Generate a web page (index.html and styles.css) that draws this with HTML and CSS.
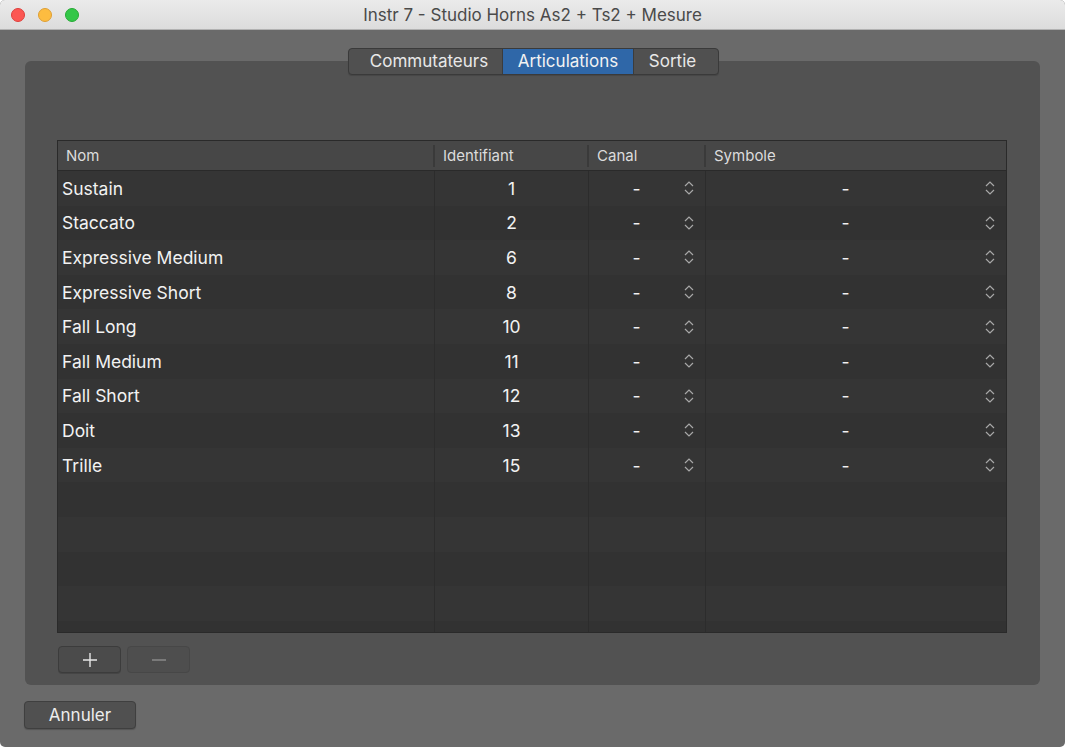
FILE: index.html
```html
<!DOCTYPE html>
<html lang="fr">
<head>
<meta charset="utf-8">
<title>Instr 7</title>
<link rel="stylesheet" href="styles.css">
</head>
<body>
<div class="window">
  <div class="titlebar">
    <div class="lights">
      <span class="light red"></span>
      <span class="light yellow"></span>
      <span class="light green"></span>
    </div>
    <div class="title">Instr 7 - Studio Horns As2 + Ts2 + Mesure</div>
  </div>
  <div class="content">
    <div class="segmented">
      <div class="seg">Commutateurs</div>
      <div class="seg active">Articulations</div>
      <div class="seg">Sortie</div>
    </div>
    <div class="panel">
      <div class="table">
        <div class="thead">
          <div class="th">Nom</div>
          <div class="th">Identifiant</div>
          <div class="th">Canal</div>
          <div class="th last">Symbole</div>
        </div>
        <div class="tbody" id="tbody"></div>
      </div>
      <div class="addrem">
        <button class="sq">
          <svg width="16" height="16" viewBox="0 0 16 16"><path d="M8 1v14M1 8h14" stroke="#e8e8e8" stroke-width="1.4" fill="none"/></svg>
        </button>
        <button class="sq dim">
          <svg width="16" height="16" viewBox="0 0 16 16"><path d="M1 8h14" stroke="#8a8a8a" stroke-width="1.4" fill="none"/></svg>
        </button>
      </div>
    </div>
    <div class="footer">
      <button class="btn">Annuler</button>
    </div>
  </div>
</div>
<script src="app.js"></script>
</body>
</html>
```

FILE: app.js
```js
const data = [
  ["Sustain", "1"], ["Staccato", "2"], ["Expressive Medium", "6"],
  ["Expressive Short", "8"], ["Fall Long", "10"], ["Fall Medium", "11"],
  ["Fall Short", "12"], ["Doit", "13"], ["Trille", "15"]
];
const stepper = '<svg class="step" width="10" height="18" viewBox="0 0 10 18"><path d="M1 7L5 3L9 7M1 11L5 15L9 11" stroke="#a8a8a8" stroke-width="1.2" fill="none"/></svg>';
const tb = document.getElementById("tbody");
let html = "";
for (let i = 0; i < 14; i++) {
  const r = data[i];
  html += '<div class="row ' + (i % 2 ? "odd" : "even") + '">';
  if (r) {
    html += '<div class="td name">' + r[0] + '</div>' +
      '<div class="td id">' + r[1] + '</div>' +
      '<div class="td pop"><span class="val">-</span>' + stepper + '</div>' +
      '<div class="td pop last"><span class="val">-</span>' + stepper + '</div>';
  } else {
    html += '<div class="td"></div><div class="td"></div><div class="td"></div><div class="td last"></div>';
  }
  html += '</div>';
}
tb.innerHTML = html;
```

FILE: styles.css
```css
html, body {
  margin: 0;
  padding: 0;
  background: #ffffff;
}
body {
  width: 1067px;
  height: 750px;
  overflow: hidden;
  font-family: Inter, "Noto Sans", sans-serif;
}
.window {
  width: 1065px;
  height: 747px;
  border-radius: 5px;
  overflow: hidden;
  background: #6a6a6a;
  display: flex;
  flex-direction: column;
}
.titlebar {
  height: 29px;
  flex: none;
  background: linear-gradient(#ebebeb, #dcdcdc);
  border-bottom: 1px solid #b2b2b2;
  display: flex;
  align-items: center;
  position: relative;
}
.lights {
  display: flex;
  gap: 13px;
  padding-left: 11px;
}
.light {
  width: 14px;
  height: 14px;
  border-radius: 50%;
  box-sizing: border-box;
}
.red { background: #fc5753; border: 1px solid #de3f3b; }
.yellow { background: #fdbc40; border: 1px solid #de9f34; }
.green { background: #33c748; border: 1px solid #27aa35; }
.title {
  position: absolute;
  left: 0;
  right: 0;
  top: 0;
  height: 29px;
  line-height: 30px;
  text-align: center;
  font-size: 17px;
  color: #4a4a4a;
  pointer-events: none;
}
.content {
  flex: 1;
  display: flex;
  flex-direction: column;
  padding: 0 25px 0 24px;
}
.segmented {
  align-self: center;
  margin-top: 18px;
  margin-left: 3px;
  display: flex;
  height: 27px;
  box-sizing: border-box;
  border: 1px solid #3a3a3a;
  border-radius: 4px;
  background: #505050;
  overflow: hidden;
  position: relative;
  z-index: 2;
  box-shadow: 0 1px 1px rgba(0,0,0,0.15);
}
.seg {
  font-size: 17px;
  color: #e8e8e8;
  line-height: 25px;
  text-align: center;
  border-right: 1px solid #3c3c3c;
  box-sizing: border-box;
}
.seg:nth-child(1) { width: 154px; padding-left: 7px; }
.seg:nth-child(2) { width: 131px; }
.seg:nth-child(3) { width: 84px; border-right: none; padding-right: 7px; }
.seg.active {
  background: #2f67a8;
  color: #f2f2f2;
}
.panel {
  margin-top: -14px;
  margin-left: 1px;
  width: 1015px;
  height: 624px;
  box-sizing: border-box;
  background: #525252;
  border-radius: 6px;
  padding: 79px 33px 0 32px;
  display: flex;
  flex-direction: column;
}
.table {
  width: 950px;
  height: 493px;
  box-sizing: border-box;
  border: 1px solid #2a2a2a;
  display: flex;
  flex-direction: column;
  background: #333333;
}
.thead {
  height: 30px;
  flex: none;
  display: grid;
  grid-template-columns: 377px 154px 117px 300px;
  background: #474747;
  border-bottom: 1px solid #2a2a2a;
  box-sizing: border-box;
  align-items: center;
}
.th {
  font-size: 15px;
  color: #dcdcdc;
  padding-left: 8px;
  height: 22px;
  line-height: 22px;
  border-right: 2px solid #3a3a3a;
}
.th.last { border-right: none; }
.tbody {
  flex: 1;
  overflow: hidden;
}
.row {
  height: 34.6px;
  display: grid;
  grid-template-columns: 377px 154px 117px 300px;
}
.row.even { background: #353535; }
.row.odd { background: #323232; }
.td {
  border-right: 1px solid #2c2c2c;
  display: flex;
  align-items: center;
  font-size: 17.5px;
  color: #f2f2f2;
}
.td.last { border-right: none; }
.td.name { padding-left: 4px; }
.td.id { justify-content: center; }
.td.pop { padding-right: 11px; }
.val {
  flex: 1;
  text-align: center;
}
.step { flex: none; }
.addrem {
  display: flex;
  gap: 6px;
  margin-top: 13px;
  padding-left: 1px;
}
.sq {
  width: 63px;
  height: 27px;
  box-sizing: border-box;
  border: 1px solid #3c3c3c;
  background: #4b4b4b;
  border-radius: 4px;
  display: flex;
  align-items: center;
  justify-content: center;
  padding: 0;
  box-shadow: 0 1px 0 rgba(0,0,0,0.15);
}
.sq.dim {
  background: #4e4e4e;
  border-color: #474747;
  box-shadow: none;
}
.footer {
  padding-top: 16px;
}
.btn {
  width: 112px;
  height: 28px;
  box-sizing: border-box;
  background: #505050;
  border: 1px solid #3f3f3f;
  border-radius: 4px;
  color: #ececec;
  font-family: Inter, "Noto Sans", sans-serif;
  font-size: 17px;
  padding: 0;
  box-shadow: 0 1px 1px rgba(0,0,0,0.2);
}
```
